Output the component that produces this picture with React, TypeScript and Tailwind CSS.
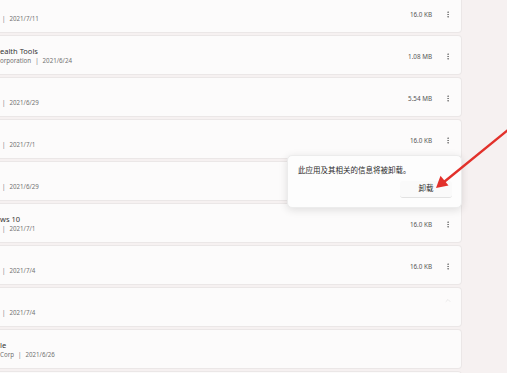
import { MoreVertical, ChevronUp } from 'lucide-react';

type Row = {
  title?: string;
  prefix?: string;
  date: string;
  size?: string;
  kebab?: boolean;
  chevron?: boolean;
};

const ROWS: Row[] = [
  { date: '2021/7/11', size: '16.0 KB', kebab: true },
  { title: 'ealth Tools', prefix: 'orporation', date: '2021/6/24', size: '1.08 MB', kebab: true },
  { date: '2021/6/29', size: '5.54 MB', kebab: true },
  { date: '2021/7/1', size: '16.0 KB', kebab: true },
  { date: '2021/6/29' },
  { title: 'ws 10', date: '2021/7/1', size: '16.0 KB', kebab: true },
  { date: '2021/7/4', size: '16.0 KB', kebab: true },
  { date: '2021/7/4', chevron: true },
  { title: 'le', prefix: 'Corp', date: '2021/6/26' },
  { date: '' },
];

const font = { fontFamily: '"Noto Sans", "Noto Sans CJK SC", sans-serif' };

function AppRow({ row }: { row: Row }) {
  return (
    <div className="h-[40px] shrink-0 bg-[#fcfbfb] border-y border-r border-[#ebe7e7] rounded-r-[4px] flex items-center">
      <div className="flex-1 flex flex-col pt-[2px]">
        <div className="h-[10px] leading-[10px] text-[7.5px] text-[#333] whitespace-nowrap">{row.title ?? ''}</div>
        <div className="h-[10px] leading-[10px] text-[6.2px] text-[#727272] flex items-center gap-[3px] whitespace-nowrap">
          {row.prefix && <span className="pr-[1px]">{row.prefix}</span>}
          {row.date && <span className={row.prefix ? '' : 'pl-[2px]'}>|</span>}
          <span className="pl-[1px]">{row.date}</span>
        </div>
      </div>
      <div className="flex items-center pt-[3px]">
        {row.size && <span className="text-[6.3px] text-[#555] whitespace-nowrap">{row.size}</span>}
        <div className="w-[8px] ml-[12px] mr-[9px] flex items-center justify-center">
          {row.kebab && <MoreVertical className="w-[9px] h-[9px] text-[#666]" strokeWidth={2.2} />}
          {row.chevron && <ChevronUp className="w-[9px] h-[9px] -mt-[16px] text-[#e0e0e0]" strokeWidth={2} />}
        </div>
      </div>
    </div>
  );
}

export default function App() {
  return (
    <div className="relative w-[507px] h-[373px] overflow-hidden bg-[#f6f1f1]" style={font}>
      <div className="w-[462px] -mt-[7px] flex flex-col gap-[2px]">
        {ROWS.map((row, i) => (
          <AppRow key={i} row={row} />
        ))}
      </div>

      {/* uninstall flyout */}
      <div className="absolute left-[287px] top-[155px] w-[175px] h-[53px] bg-[#fdfdfd] rounded-[5px] border border-[#ececec] shadow-[0_2px_8px_rgba(0,0,0,0.12)] flex flex-col">
        <div className="pl-[10px] pt-[8px] text-[7.5px] leading-[12px] text-[#2a2a2a] whitespace-nowrap">
          此应用及其相关的信息将被卸载。
        </div>
        <div className="flex-1 flex items-end justify-end pr-[9px] pb-[9px]">
          <button className="w-[52px] h-[17px] rounded-[3px] bg-[#fafafa] border-b border-[#e2e2e2] text-[7.5px] text-[#2a2a2a] flex items-center justify-center">
            卸载
          </button>
        </div>
      </div>

      {/* red annotation arrow */}
      <svg className="absolute inset-0 pointer-events-none" width="507" height="373" viewBox="0 0 507 373">
        <line x1="508" y1="130" x2="444" y2="182" stroke="#e2312b" strokeWidth="2.4" strokeLinecap="round" />
        <polygon points="436,188 448.5,185.5 440.5,175.8" fill="#e2312b" />
      </svg>
    </div>
  );
}
